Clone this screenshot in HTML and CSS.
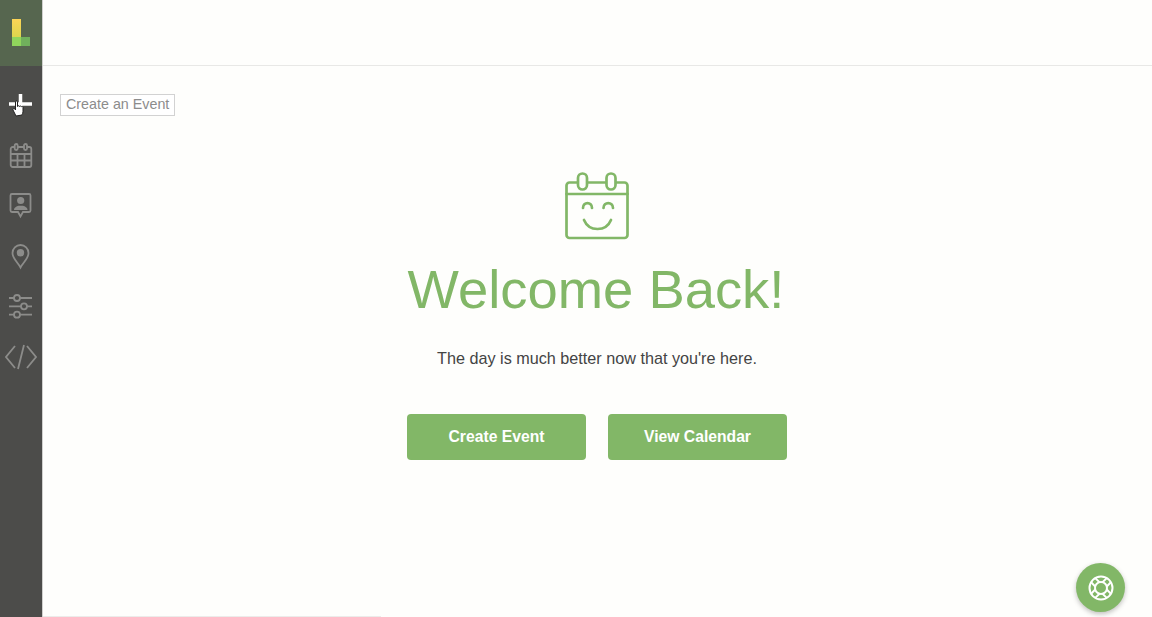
FILE: index.html
```html
<!DOCTYPE html>
<html lang="en">
<head>
    <meta charset="UTF-8">
    <meta name="viewport" content="width=device-width, initial-scale=1.0">
    <title>Welcome Back</title>
    <link rel="stylesheet" href="styles.css">
</head>
<body>
    <nav class="sidebar">
        <div class="logo">
            <svg width="42" height="66" viewBox="0 0 42 66">
                <defs>
                    <linearGradient id="logoFill" x1="0" y1="0" x2="0" y2="1">
                        <stop offset="0" stop-color="#fdd456"/>
                        <stop offset="0.66" stop-color="#dcd64e"/>
                        <stop offset="0.67" stop-color="#90d55c"/>
                        <stop offset="1" stop-color="#90d55c"/>
                    </linearGradient>
                </defs>
                <rect x="12" y="19" width="9" height="27" fill="url(#logoFill)"/>
                <rect x="21" y="37" width="9" height="9" fill="#70b05c"/>
            </svg>
        </div>
        <ul class="nav-list">
            <li class="nav-item">
                <svg class="nav-icon" width="32" height="32" viewBox="0 0 32 32">
                    <path class="plus" d="M15.500 6v21M4 16h23"/>
                    <path class="hand" d="M11 28l-3-6c-.5-1.500 1-2 2-1l.5 1v-8c0-1.500 2-1.500 2 0v4.500c.3-1 2-1 2 0 .3-.8 1.800-.7 1.900.3.300-.6 1.600-.4 1.600.5v4c0 1.500-.5 2.500-1 3.700z"/>
                </svg>
            </li>
            <li class="nav-item">
                <svg class="nav-icon" width="32" height="32" viewBox="0 0 32 32">
                    <rect x="5.700" y="8" width="20.600" height="20" rx="2"/>
                    <path d="M5.700 15h20.600M5.700 21.500h20.600M12.500 15v13M19.500 15v13"/>
                    <rect class="knob" x="9.700" y="5" width="3" height="6" rx="1.500"/>
                    <rect class="knob" x="19" y="5" width="3" height="6" rx="1.500"/>
                </svg>
            </li>
            <li class="nav-item">
                <svg class="nav-icon" width="32" height="32" viewBox="0 0 32 32">
                    <path d="M7 5h17a1.500 1.500 0 0 1 1.500 1.500v15a1.500 1.500 0 0 1-1.500 1.500h-6l-2.500 4.500-2.500-4.500h-6a1.500 1.500 0 0 1-1.500-1.500v-15a1.500 1.500 0 0 1 1.500-1.500z"/>
                    <circle class="solid" cx="15.700" cy="11.500" r="3.600"/>
                    <path class="solid" d="M9 21c0-2.500 2.500-3.500 4.500-4.200h4.500c2 .7 4.500 1.700 4.500 4.200z"/>
                </svg>
            </li>
            <li class="nav-item">
                <svg class="nav-icon" width="32" height="32" viewBox="0 0 32 32">
                    <path d="M15.500 27.500c-3-5.500-8-9-8-14.500a8 8 0 0 1 16 0c0 5.500-5 9-8 14.500z"/>
                    <circle class="solid" cx="15.500" cy="12.800" r="3.700"/>
                </svg>
            </li>
            <li class="nav-item">
                <svg class="nav-icon" width="32" height="32" viewBox="0 0 32 32">
                    <path d="M4 8h23M4 16.300h23M4 24.700h23"/>
                    <circle class="knob" cx="12" cy="8" r="3"/>
                    <circle class="knob" cx="19" cy="16.300" r="3"/>
                    <circle class="knob" cx="12" cy="24.700" r="3"/>
                </svg>
            </li>
            <li class="nav-item">
                <svg class="nav-icon" width="32" height="32" viewBox="0 0 32 32">
                    <path d="M10 5L1 16l9 11M22 5l9 11-9 11M19 4l-6 24"/>
                </svg>
            </li>
        </ul>
    </nav>

    <div class="tooltip">Create an Event</div>

    <main class="main">
        <header class="topbar"></header>
        <section class="welcome">
            <svg class="welcome-icon" width="66" height="70" viewBox="0 0 66 70">
                <rect x="2.500" y="11.500" width="61" height="55.500" rx="3"/>
                <path d="M2.500 23h61"/>
                <rect class="ring" x="14" y="2.500" width="9" height="16" rx="4.500"/>
                <rect class="ring" x="42.500" y="2.500" width="9" height="16" rx="4.500"/>
                <path d="M19 37c0-6.500 9-6.500 9 0M39.500 37c0-6.500 9.500-6.500 9.500 0M20 49c5 12 22 12 27 0"/>
            </svg>
            <h1 class="welcome-title">Welcome Back!</h1>
            <p class="welcome-text">The day is much better now that you're here.</p>
            <div class="actions">
                <a class="btn" href="#">Create Event</a>
                <a class="btn" href="#">View Calendar</a>
            </div>
        </section>
        <div class="progress"></div>
    </main>

    <button class="help" type="button" aria-label="Help">
        <svg width="30" height="30" viewBox="0 0 30 30">
            <circle cx="15" cy="15" r="11.500"/>
            <circle cx="15" cy="15" r="6"/>
            <path d="M9.300 5.100l4.400 4.400M5.100 9.300l4.400 4.400M20.700 5.100l-4.400 4.400M24.900 9.300l-4.400 4.400M9.300 24.900l4.400-4.400M5.100 20.700l4.400-4.400M20.700 24.900l-4.400-4.400M24.900 20.700l-4.400-4.400"/>
        </svg>
    </button>
</body>
</html>
```
FILE: styles.css
```css
html, body {
    height: 100%;
}
body {
    margin: 0;
    display: flex;
    overflow: hidden;
    font-family: "Liberation Sans", Arial, sans-serif;
    background-color: #fefefc;
    color: #444;
}
.sidebar {
    width: 42px;
    flex-shrink: 0;
    background-color: #4c4c4a;
    border-right: 1px solid #d0d0ce;
}
.logo {
    height: 66px;
    background-color: #56664f;
}
.logo svg {
    display: block;
}
.nav-list {
    list-style: none;
    margin: 0;
    padding: 13px 0 0;
}
.nav-item {
    height: 50.5px;
    display: flex;
    align-items: center;
    justify-content: center;
}
.nav-icon {
    fill: none;
    stroke: #8c8c8a;
    stroke-width: 1.800;
}
.nav-icon .solid {
    fill: #8c8c8a;
    stroke: none;
}
.nav-icon .knob {
    fill: #4c4c4a;
}
.nav-icon .plus {
    stroke: #fff;
    stroke-width: 3.500;
}
.nav-icon .hand {
    fill: #fff;
    stroke: #222;
    stroke-width: 1;
}
.tooltip {
    position: absolute;
    left: 60px;
    top: 94px;
    padding: 0 5px;
    height: 20px;
    line-height: 19px;
    font-size: 14.300px;
    color: #8c8c8c;
    background-color: #fff;
    border: 1px solid #d2d2d2;
}
.main {
    flex: 1;
    display: flex;
    flex-direction: column;
}
.topbar {
    height: 65px;
    flex-shrink: 0;
    border-bottom: 1px solid #e8e8e6;
}
.welcome {
    flex: 1;
    display: flex;
    flex-direction: column;
    align-items: center;
    padding: 105px 1px 0 0;
}
.welcome-icon {
    display: block;
    fill: none;
    stroke: #82b767;
    stroke-width: 2.700;
    stroke-linecap: round;
}
.welcome-icon .ring {
    fill: #fefefc;
}
.welcome-title {
    margin: 17px 2px 0 0;
    font-size: 54.400px;
    line-height: 64px;
    font-weight: normal;
    color: #82b767;
}
.welcome-text {
    margin: 25px 0 0;
    font-size: 16.200px;
    line-height: 22px;
}
.actions {
    display: flex;
    gap: 22px;
    margin-top: 45px;
}
.btn {
    width: 179px;
    height: 46px;
    line-height: 46px;
    text-align: center;
    font-size: 15.700px;
    font-weight: bold;
    text-decoration: none;
    color: #fff;
    background-color: #82b767;
    border-radius: 4px;
}
.progress {
    width: 338px;
    height: 1px;
    flex-shrink: 0;
    background-color: #ececea;
}
.help {
    position: fixed;
    right: 27px;
    bottom: 5px;
    width: 49px;
    height: 49px;
    padding: 0;
    display: flex;
    align-items: center;
    justify-content: center;
    border: none;
    border-radius: 50%;
    background-color: #82b767;
    box-shadow: 0 2px 5px rgba(0, 0, 0, 0.25);
}
.help svg {
    fill: none;
    stroke: #fff;
    stroke-width: 2;
}
```
